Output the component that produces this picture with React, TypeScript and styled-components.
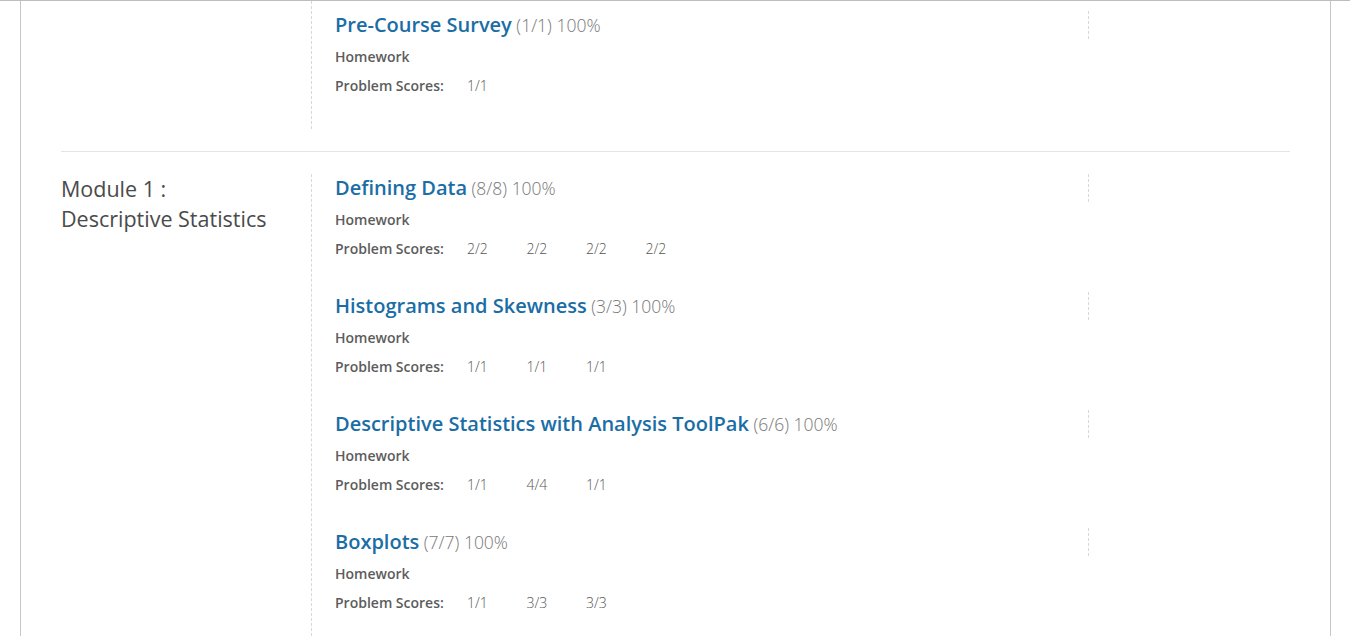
import styled, { createGlobalStyle } from "styled-components";

const GlobalStyle = createGlobalStyle`
  html, body {
    margin: 0;
    padding: 0;
    background: #fff;
    font-family: "Open Sans", "Liberation Sans", sans-serif;
    overflow: hidden;
  }
`;

type Item = {
  title: string;
  earned: number;
  total: number;
  kind: string;
  scores: string[];
};

type Module = {
  name: string[];
  items: Item[];
  cut?: boolean;
};

const modules: Module[] = [
  {
    name: [],
    cut: true,
    items: [
      { title: "Pre-Course Survey", earned: 1, total: 1, kind: "Homework", scores: ["1/1"] },
    ],
  },
  {
    name: ["Module 1 :", "Descriptive Statistics"],
    items: [
      { title: "Defining Data", earned: 8, total: 8, kind: "Homework", scores: ["2/2", "2/2", "2/2", "2/2"] },
      { title: "Histograms and Skewness", earned: 3, total: 3, kind: "Homework", scores: ["1/1", "1/1", "1/1"] },
      {
        title: "Descriptive Statistics with Analysis ToolPak",
        earned: 6,
        total: 6,
        kind: "Homework",
        scores: ["1/1", "4/4", "1/1"],
      },
      { title: "Boxplots", earned: 7, total: 7, kind: "Homework", scores: ["1/1", "3/3", "3/3"] },
    ],
  },
];

const App = (): JSX.Element => {
  return (
    <Page>
      <GlobalStyle />
      <Card>
        {modules.map((mod, i) => (
          <Section key={i} $first={i === 0} $cut={mod.cut}>
            <ModuleName>
              {mod.name.map((line) => (
                <div key={line}>{line}</div>
              ))}
            </ModuleName>
            <Items>
              {mod.items.map((item) => (
                <Entry key={item.title}>
                  <TitleRow>
                    <Title>
                      <a href="#">{item.title}</a>
                      <Percent>
                        {" "}
                        ({item.earned}/{item.total}) {Math.round((item.earned / item.total) * 100)}%
                      </Percent>
                    </Title>
                    <Aside />
                  </TitleRow>
                  <Kind>{item.kind}</Kind>
                  <Scores>
                    <ScoreLabel>Problem Scores:</ScoreLabel>
                    {item.scores.map((s, k) => (
                      <Score key={k}>{s}</Score>
                    ))}
                  </Scores>
                </Entry>
              ))}
            </Items>
          </Section>
        ))}
      </Card>
    </Page>
  );
};

export default App;

const Page = styled.div`
  width: 1350px;
  height: 636px;
  border-top: 1px solid #bdbdbd;
  box-sizing: border-box;
  overflow: hidden;
`;

const Card = styled.div`
  margin: 0 19px 0 20px;
  border-left: 1px solid #c6c6c6;
  border-right: 1px solid #c6c6c6;
  padding: 0 40px;
  min-height: 100%;
  box-sizing: border-box;
`;

const Section = styled.section<{ $first?: boolean; $cut?: boolean }>`
  display: flex;
  padding: ${(p) => (p.$cut ? "0 0 22px" : "22px 0")};
  border-top: ${(p) => (p.$first ? "none" : "1px solid #e4e4e4")};
`;

const ModuleName = styled.div`
  width: 250px;
  flex-shrink: 0;
  font-size: 21.5px;
  line-height: 30px;
  color: #4a4a4a;
  font-weight: 400;
`;

const Items = styled.div`
  flex: 1;
  border-left: 1px dashed #d8d8d8;
  padding-left: 23px;
  ${Section}:first-child & > div:first-child {
    padding-top: 10px;
  }
`;

const Entry = styled.div`
  padding-bottom: 33px;
`;

const TitleRow = styled.div`
  display: grid;
  grid-template-columns: 1fr 202px;
  height: 28px;
`;

const Title = styled.div`
  font-size: 20px;
  line-height: 28px;
  white-space: nowrap;

  a {
    color: #1a6da5;
    font-weight: 600;
    text-decoration: none;
  }
`;

const Percent = styled.span`
  font-size: 17.5px;
  font-weight: 300;
  color: #777;
`;

const Aside = styled.div`
  border-left: 1px dashed #d8d8d8;
`;

const Kind = styled.div`
  margin-top: 8px;
  font-size: 14px;
  line-height: 20px;
  font-weight: 600;
  color: #5c5c5c;
`;

const Scores = styled.div`
  margin-top: 9px;
  display: flex;
  font-size: 14px;
  line-height: 20px;
  color: #5c5c5c;
`;

const ScoreLabel = styled.span`
  width: 132px;
  font-weight: 600;
`;

const Score = styled.span`
  width: 59.5px;
  font-size: 14px;
  font-weight: 300;
  color: #555;
`;
